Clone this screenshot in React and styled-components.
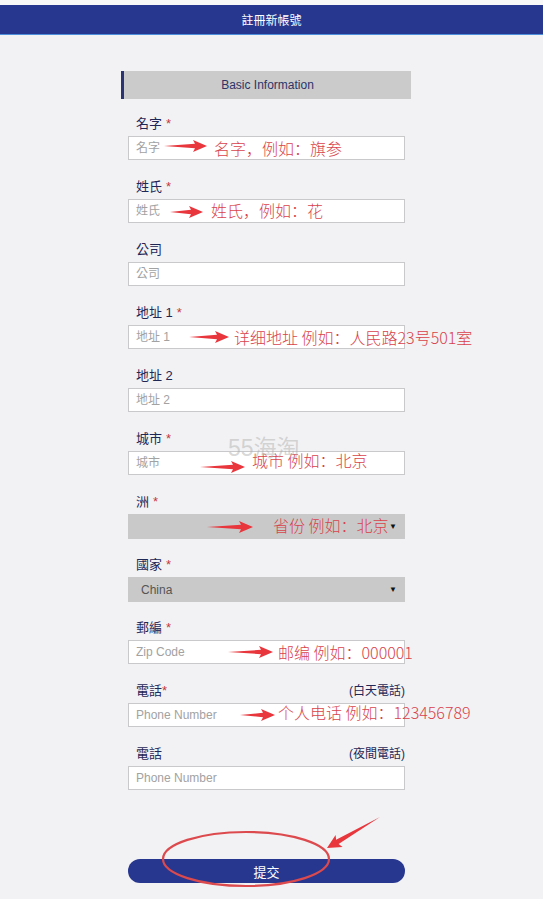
import React from 'react'
import styled, { createGlobalStyle } from 'styled-components'

const GlobalStyle = createGlobalStyle`
  html, body {
    margin: 0;
    padding: 0;
    background: #f2f2f4;
  }
  body {
    font-family: "Liberation Sans", "Noto Sans CJK TC", sans-serif;
  }
`

const Page = styled.div`
  position: relative;
  width: 543px;
  min-height: 899px;
  padding-top: 5px;
  box-sizing: border-box;
  background: linear-gradient(#f8f8f9 0 5px, #f2f2f4 5px);
`

const Header = styled.header`
  height: 29px;
  display: flex;
  align-items: center;
  justify-content: center;
  background: #27378f;
  border-bottom: 1px solid #4d8fdb;
  color: #ffffff;
  font-size: 12px;
  font-family: "Noto Sans CJK TC", sans-serif;
`

const Form = styled.form`
  width: 277px;
  margin: 36px 0 0 128px;
  display: flex;
  flex-direction: column;
`

const SectionBar = styled.div`
  width: 287px;
  height: 28px;
  margin-left: -7px;
  margin-bottom: 14px;
  display: flex;
  align-items: center;
  justify-content: center;
  background: #cbcbcb;
  border-left: 3px solid #2a3472;
  color: #2c3468;
  font-size: 12px;
`

const Field = styled.div`
  display: flex;
  flex-direction: column;
  margin-bottom: 16px;
`

const LabelRow = styled.div`
  display: flex;
  justify-content: space-between;
  align-items: center;
  height: 18px;
  margin: 0 0 5px 8px;
  color: #1f2757;
  font-size: 13px;
  font-family: "Liberation Sans", "Noto Sans CJK TC", sans-serif;
`

const Star = styled.span`
  color: #c4383a;
  margin-left: ${(p) => (p.$tight ? '0' : '4px')};
`

const Hint = styled.span`
  font-size: 12px;
  color: #1f2757;
`

const Control = styled.div`
  position: relative;
  height: 24px;
`

const TextInput = styled.input`
  width: 100%;
  height: 24px;
  box-sizing: border-box;
  border: 1px solid #c9c9cc;
  background: #ffffff;
  padding: 0 7px;
  font-size: 12px;
  font-family: "Liberation Sans", "Noto Sans CJK TC", sans-serif;
  color: #333;
  outline: none;
  &::placeholder {
    color: #a2a2a2;
  }
`

const SelectBox = styled.div`
  height: 25px;
  display: flex;
  align-items: center;
  justify-content: space-between;
  padding: 0 8px 0 13px;
  background: #c9c9c9;
  color: #555555;
  font-size: 12px;
`

const Caret = styled.span`
  font-size: 8px;
  color: #111;
`

const Arrow = styled.svg`
  position: absolute;
  left: ${(p) => p.$left}px;
  top: ${(p) => p.$top - 7}px;
  overflow: visible;
`

const Note = styled.span`
  position: absolute;
  left: ${(p) => p.$left}px;
  top: ${(p) => p.$top - 10}px;
  line-height: 20px;
  font-size: 16px;
  white-space: nowrap;
  color: #d8434b;
  font-family: "Noto Sans CJK SC", sans-serif;
  font-weight: 300;
`

const Watermark = styled.span`
  position: absolute;
  left: 228px;
  top: 429px;
  font-size: 23px;
  font-family: "Liberation Sans", "Noto Sans CJK SC", sans-serif;
  color: rgba(170, 170, 170, 0.45);
  pointer-events: none;
`

const SubmitButton = styled.button`
  margin-top: 53px;
  height: 24px;
  width: 100%;
  border: none;
  border-radius: 12px;
  background: #27378f;
  color: #ffffff;
  font-size: 13px;
  font-family: "Noto Sans CJK TC", sans-serif;
`

const Markup = styled.svg`
  position: absolute;
  left: 150px;
  top: 810px;
  width: 240px;
  height: 80px;
  overflow: visible;
`

const FlatArrow = ({ left, top, width }) => {
  const w = width
  const d = `M0 7 L${w - 12} 4.8 L${w - 14} 1 L${w} 7 L${w - 14} 13 L${w - 12} 9.2 Z`
  return (
    <Arrow $left={left} $top={top} width={w} height={14} viewBox={`0 0 ${w} 14`}>
      <path d={d} fill="#e8363c" />
    </Arrow>
  )
}

const fields = [
  { label: '名字', required: true, placeholder: '名字', arrow: [36, 10, 43], note: [86, 12, '名字，例如：旗参'] },
  { label: '姓氏', required: true, placeholder: '姓氏', arrow: [42, 13, 33], note: [83, 11, '姓氏，例如：花'] },
  { label: '公司', placeholder: '公司' },
  { label: '地址 1', required: true, placeholder: '地址 1', arrow: [61, 12, 40], note: [106, 12, '详细地址 例如：人民路23号501室'] },
  { label: '地址 2', placeholder: '地址 2' },
  { label: '城市', required: true, placeholder: '城市', arrow: [72, 16, 45], note: [124, 9, '城市 例如：北京'] },
  { label: '洲', required: true, select: '', arrow: [79, 13, 46], note: [145, 11, '省份 例如：北京'] },
  { label: '國家', required: true, select: 'China' },
  { label: '郵編', required: true, placeholder: 'Zip Code', arrow: [100, 12, 45], note: [150, 12, '邮编 例如：000001'] },
  { label: '電話', required: true, tight: true, hint: '(白天電話)', placeholder: 'Phone Number', arrow: [112, 12, 35], note: [150, 9, '个人电话 例如：123456789'] },
  { label: '電話', hint: '(夜間電話)', placeholder: 'Phone Number' },
]

const App = () => {
  return (
    <Page>
      <GlobalStyle />
      <Header>註冊新帳號</Header>
      <Form onSubmit={(e) => e.preventDefault()}>
        <SectionBar>Basic Information</SectionBar>
        {fields.map((f, i) => (
          <Field key={i}>
            <LabelRow>
              <span>
                {f.label}
                {f.required && <Star $tight={f.tight}>*</Star>}
              </span>
              {f.hint && <Hint>{f.hint}</Hint>}
            </LabelRow>
            <Control>
              {f.select !== undefined ? (
                <SelectBox>
                  <span>{f.select}</span>
                  <Caret>▼</Caret>
                </SelectBox>
              ) : (
                <TextInput placeholder={f.placeholder} />
              )}
              {f.arrow && <FlatArrow left={f.arrow[0]} top={f.arrow[1]} width={f.arrow[2]} />}
              {f.note && (
                <Note $left={f.note[0]} $top={f.note[1]}>
                  {f.note[2]}
                </Note>
              )}
            </Control>
          </Field>
        ))}
        <SubmitButton type="submit">提交</SubmitButton>
      </Form>
      <Watermark>55海淘</Watermark>
      <Markup viewBox="0 0 240 80">
        <ellipse cx="96" cy="49" rx="83" ry="27" fill="none" stroke="#dc4a4e" strokeWidth="2.2" />
        <polygon
          points="230,7 186.1,29.7 185.6,24.9 177,38 192.6,36.9 188.6,34.1"
          fill="#e8363c"
        />
      </Markup>
    </Page>
  )
}

export default App
